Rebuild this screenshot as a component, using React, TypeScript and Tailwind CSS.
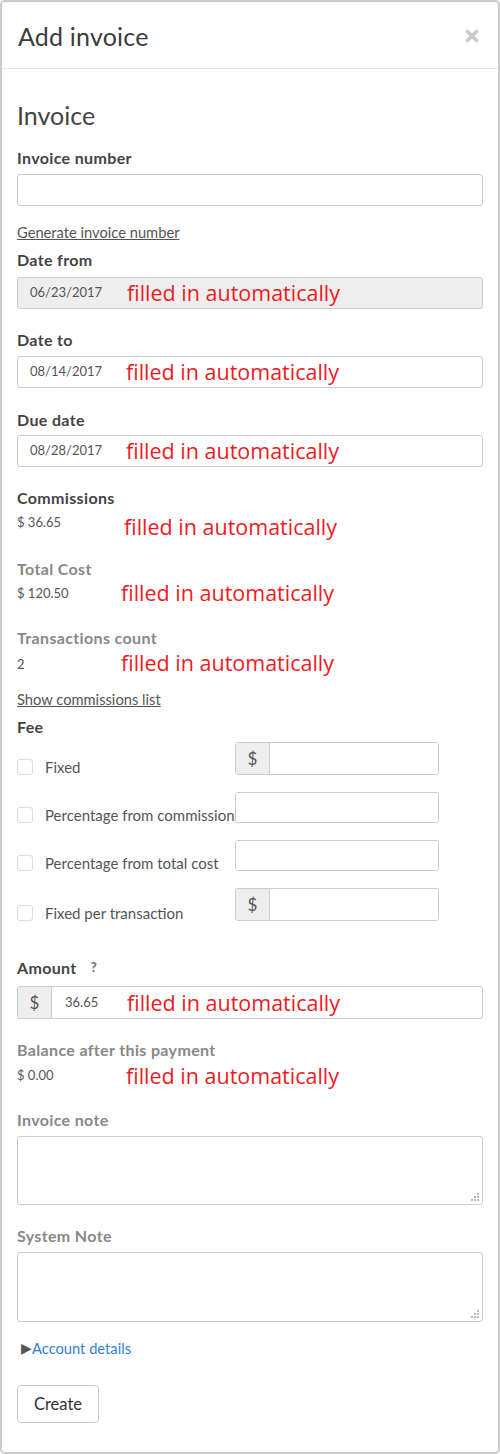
import React from "react";

const font = { fontFamily: "Lato, 'Open Sans', sans-serif" };
const redFont = { fontFamily: "'Open Sans', 'Noto Sans', sans-serif" };

function Red({ className = "" }: { className?: string }) {
  return (
    <span className={`text-[21.5px] leading-[24px] text-[#ee1b24] whitespace-nowrap ${className}`} style={redFont}>
      filled in automatically
    </span>
  );
}

function Grip() {
  return (
    <svg className="absolute right-[3px] bottom-[3px]" width="8" height="8" viewBox="0 0 8 8">
      <rect x="6" y="0" width="2" height="2" fill="#bbb" />
      <rect x="3" y="3" width="2" height="2" fill="#bbb" />
      <rect x="6" y="3" width="2" height="2" fill="#bbb" />
      <rect x="0" y="6" width="2" height="2" fill="#bbb" />
      <rect x="3" y="6" width="2" height="2" fill="#bbb" />
      <rect x="6" y="6" width="2" height="2" fill="#bbb" />
    </svg>
  );
}

function Check() {
  return <span className="block w-[16px] h-[16px] rounded-[3px] border border-[#dcdcdc] bg-white shrink-0" />;
}

const lbl = "block text-[16px] leading-[20px] font-bold tracking-[0.35px]";

function FeeRow({ label, dollar, mt, h }: { label: string; dollar?: boolean; mt: string; h: string }) {
  return (
    <div className={`flex items-end ${mt}`}>
      <div className="w-[218px] flex items-center gap-[12px] translate-y-[1px]">
        <Check />
        <span className="text-[15px] leading-[18px] text-[#555] whitespace-nowrap">{label}</span>
      </div>
      <div className={`w-[204px] ${h} flex border border-[#ccc] rounded-[3px] overflow-hidden`}>
        {dollar && (
          <div className="w-[34px] bg-[#eeeeee] border-r border-[#ccc] flex items-center justify-center text-[17px] text-[#555]">
            $
          </div>
        )}
        <div className="flex-1 bg-white" />
      </div>
    </div>
  );
}

export default function App() {
  return (
    <div className="w-[500px] h-[1454px] bg-white" style={font}>
      <div className="h-full border-2 border-[#cbcbcb] rounded-[5px] flex flex-col">
        {/* header */}
        <div className="h-[67px] border-b border-[#e5e5e5] flex items-center justify-between pl-[16px] pr-[19px] shrink-0">
          <h2 className="text-[25px] leading-[28px] text-[#3c3c3c] mt-[2px] tracking-[0.2px]">Add invoice</h2>
          <svg width="14" height="14" viewBox="0 0 14 14" className="mt-[2px]">
            <path d="M2.5 2.5 L11.5 11.5 M11.5 2.5 L2.5 11.5" stroke="#c9c9c9" strokeWidth="3.6" strokeLinecap="round" />
          </svg>
        </div>

        <div className="px-[15px] pt-[31px] text-[#444]">
          <h3 className="text-[25px] leading-[30px] text-[#444]">Invoice</h3>

          <label className={`${lbl} mt-[18px] text-[#444]`}>Invoice number</label>
          <div className="mt-[6px] h-[32px] border border-[#ccc] rounded-[3px] bg-white" />

          <div className="mt-[16px] text-[14.7px] leading-[20px] text-[#555] underline">Generate invoice number</div>

          <label className={`${lbl} mt-[8px] text-[#444]`}>Date from</label>
          <div className="mt-[7px] h-[32px] border border-[#ccc] rounded-[3px] bg-[#eeeeee] flex items-center pl-[12px]">
            <span className="w-[97px] text-[13px] text-[#555]">06/23/2017</span>
            <Red />
          </div>

          <label className={`${lbl} mt-[21px] text-[#444]`}>Date to</label>
          <div className="mt-[6px] h-[32px] border border-[#ccc] rounded-[3px] bg-white flex items-center pl-[12px]">
            <span className="w-[96px] text-[13px] text-[#555]">08/14/2017</span>
            <Red />
          </div>

          <label className={`${lbl} mt-[22px] text-[#444]`}>Due date</label>
          <div className="mt-[5px] h-[32px] border border-[#ccc] rounded-[3px] bg-white flex items-center pl-[12px]">
            <span className="w-[96px] text-[13px] text-[#555]">08/28/2017</span>
            <Red />
          </div>

          <label className={`${lbl} mt-[21px] text-[#444]`}>Commissions</label>
          <div className="mt-[4px] flex items-start">
            <span className="w-[107px] text-[13px] leading-[20px] text-[#555]">$ 36.65</span>
            <Red className="mt-[3px]" />
          </div>

          <label className={`${lbl} mt-[20px] text-[#888]`}>Total Cost</label>
          <div className="mt-[4px] flex items-start">
            <span className="w-[104px] text-[13px] leading-[20px] text-[#555]">$ 120.50</span>
            <Red className="-mt-[2px]" />
          </div>

          <label className={`${lbl} mt-[23px] text-[#888]`}>Transactions count</label>
          <div className="mt-[4px] flex items-start">
            <span className="w-[104px] text-[13px] leading-[20px] text-[#555] mt-[2px]">2</span>
            <Red className="-mt-[1px]" />
          </div>

          <div className="mt-[14px] text-[14.7px] leading-[20px] text-[#555] underline">Show commissions list</div>

          <label className={`${lbl} mt-[8px] text-[#444]`}>Fee</label>
          <FeeRow label="Fixed" dollar mt="mt-[5px]" h="h-[33px]" />
          <FeeRow label="Percentage from commission" mt="mt-[17px]" h="h-[31px]" />
          <FeeRow label="Percentage from total cost" mt="mt-[17px]" h="h-[31px]" />
          <FeeRow label="Fixed per transaction" dollar mt="mt-[17px]" h="h-[33px]" />

          <div className="mt-[37px] flex items-center gap-[14px]">
            <label className={`${lbl} text-[#444]`}>Amount</label>
            <span className="text-[13px] leading-[14px] font-black text-[#777] -mt-[3px]">?</span>
          </div>
          <div className="mt-[8px] h-[33px] border border-[#ccc] rounded-[3px] bg-white flex overflow-hidden">
            <div className="w-[34px] bg-[#eeeeee] border-r border-[#ccc] flex items-center justify-center text-[17px] text-[#555]">
              $
            </div>
            <div className="flex items-center pl-[13px]">
              <span className="w-[62px] text-[13px] text-[#555]">36.65</span>
              <Red />
            </div>
          </div>

          <label className={`${lbl} mt-[21px] text-[#888]`}>Balance after this payment</label>
          <div className="mt-[5px] flex items-start">
            <span className="w-[109px] text-[13px] leading-[20px] text-[#555]">$ 0.00</span>
            <Red className="-mt-[1px]" />
          </div>

          <label className={`${lbl} mt-[22px] text-[#888]`}>Invoice note</label>
          <div className="relative mt-[6px] h-[69px] border border-[#ccc] rounded-[3px] bg-white">
            <Grip />
          </div>

          <label className={`${lbl} mt-[21px] text-[#888]`}>System Note</label>
          <div className="relative mt-[6px] h-[70px] border border-[#ccc] rounded-[3px] bg-white">
            <Grip />
          </div>

          <div className="mt-[16px] flex items-center text-[14.7px] leading-[20px] pl-[4px]">
            <span className="text-[14px] text-[#555] -mt-[1px]">▶</span>
            <span className="text-[#2f80d9]">Account details</span>
          </div>

          <button className="mt-[27px] w-[82px] h-[38px] border border-[#ccc] rounded-[4px] bg-white text-[16.5px] text-[#333]">
            Create
          </button>
        </div>
      </div>
    </div>
  );
}
